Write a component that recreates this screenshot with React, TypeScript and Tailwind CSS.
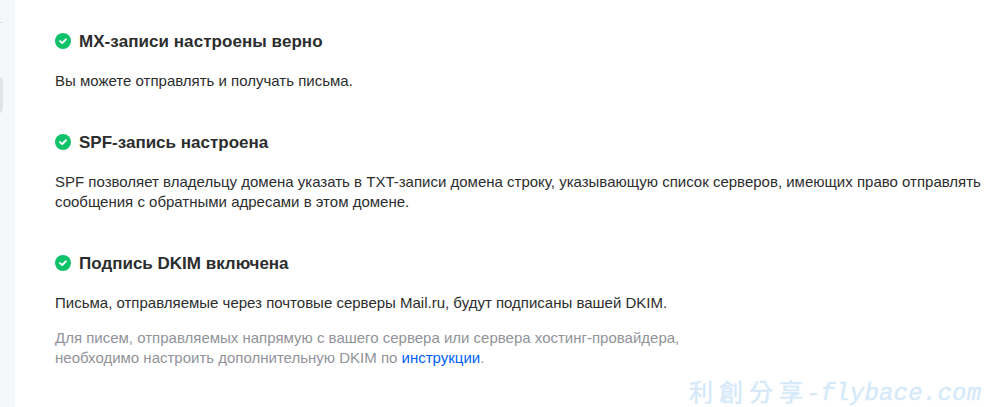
import type { ReactNode } from "react";

function CheckBadge() {
  return (
    <svg viewBox="0 0 16 16" className="h-4 w-4 shrink-0" aria-hidden="true">
      <circle cx="8" cy="8" r="8" fill="#0dc268" />
      <path d="M5 8.1 7.2 10 11 6.3" fill="none" stroke="#fff" strokeWidth="1.9" strokeLinecap="round" strokeLinejoin="round" />
    </svg>
  );
}

function Section({ title, children }: { title: ReactNode; children: ReactNode }) {
  return (
    <section>
      <h2 className="flex h-5 items-center gap-2 text-[17px] leading-5 font-bold text-[#2c2d2e]">
        <CheckBadge />
        <span className="pt-0.5">{title}</span>
      </h2>
      <div className="pt-5">{children}</div>
    </section>
  );
}

function Watermark() {
  return (
    <div className="absolute top-[376px] left-[689px] flex h-[31px] whitespace-pre text-[#d4e9f9] [-webkit-text-stroke:0.4px_#d4e9f9]">
      <span className="w-[117px] font-['Noto_Sans_CJK_TC',sans-serif] text-[24px] leading-[30px] tracking-[6px]">利創分享</span>
      <span className="pt-[5px] font-['Liberation_Mono',monospace] text-[24px] leading-[26px] tracking-[0.2px] italic">-flybace.com</span>
    </div>
  );
}

export default function App() {
  return (
    <div className="relative flex h-[407px] w-[985px] overflow-hidden bg-white font-['Liberation_Sans',Arial,sans-serif] text-[15px] leading-5 text-[#2c2d2e]">
      <aside className="w-[15px] shrink-0 bg-[#f6f7f9]">
        <div className="mt-[22px] h-px w-[3px] bg-[#dcdee2]" />
        <div className="mt-[54px] h-[36px] w-[3px] rounded-[0_3px_3px_0/0_8px_8px_0] bg-[#e2e3e9]" />
      </aside>
      <main className="flex flex-col gap-[41px] pt-[31px] pl-10 whitespace-nowrap">
        <Section title={<span className="tracking-[0.06px]">MX-записи настроены верно</span>}>
          <p>Вы можете отправлять и получать письма.</p>
        </Section>
        <Section title="SPF-запись настроена">
          <p>
            SPF позволяет владельцу домена указать в TXT-записи домена строку, указывающую список серверов, имеющих право отправлять
            <br />
            сообщения с обратными адресами в этом домене.
          </p>
        </Section>
        <Section title="Подпись DKIM включена">
          <p>Письма, отправляемые через почтовые серверы Mail.ru, будут подписаны вашей DKIM.</p>
          <p className="mt-[15px] text-[#919399]">
            Для писем, отправляемых напрямую с вашего сервера или сервера хостинг-провайдера,
            <br />
            необходимо настроить дополнительную DKIM по <a href="#" className="text-[#005ff9]">инструкции</a>.
          </p>
        </Section>
      </main>
      <Watermark />
    </div>
  );
}
